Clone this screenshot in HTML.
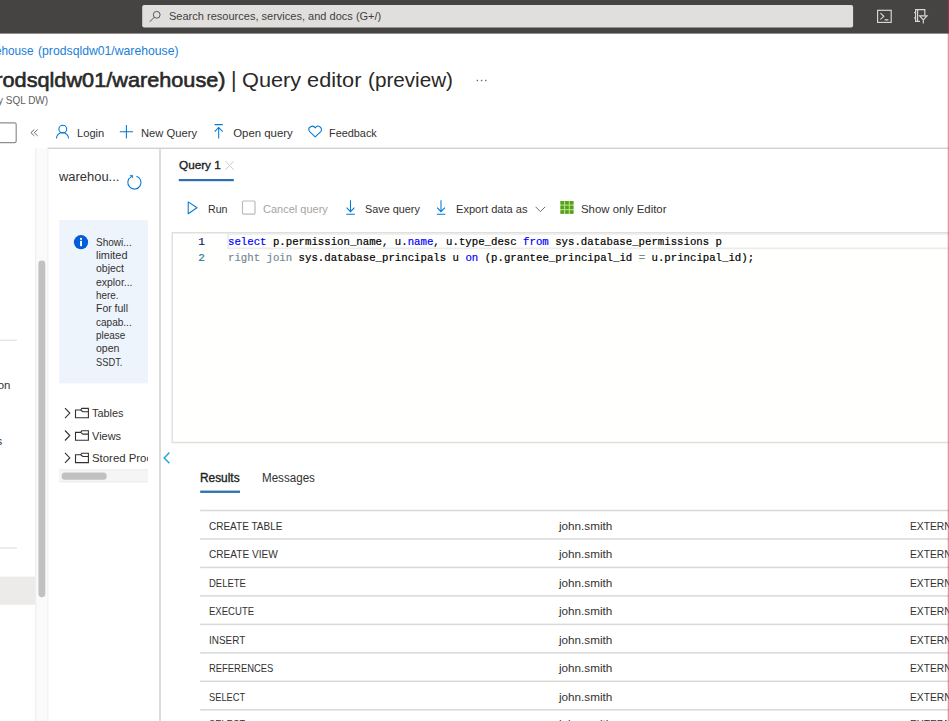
<!DOCTYPE html>
<html lang="en">
<head>
<meta charset="utf-8">
<title>Query editor (preview)</title>
<style>
html,body{margin:0;padding:0;}
body{width:949px;height:721px;overflow:hidden;position:relative;background:#fff;
  font-family:"Liberation Sans",sans-serif;color:#323130;}
.a{position:absolute;white-space:nowrap;line-height:1;transform-origin:0 0;}
.box{position:absolute;}
svg.ic{position:absolute;left:0;top:0;width:949px;height:721px;overflow:visible;pointer-events:none;}
.mono{font-family:"Liberation Mono",monospace;}
.bl{fill:none;stroke:#0078d4;stroke-width:1.05;}
.dk{fill:none;stroke:#323130;stroke-width:1.1;}
</style>
</head>
<body>
<!-- top bar -->
<div class="box" id="topbar" style="left:0;top:0;width:949px;height:33px;background:#464443;"></div>

<!-- command bar -->

<!-- left nav -->

<!-- object explorer -->


<!-- editor -->
<div class="box" id="edbox" style="left:172px;top:233px;width:777px;height:210px;background:#fffffe;"></div>

<!-- results -->

<svg class="ic" viewBox="0 0 949 721">
 <rect x="142.2" y="4.9" width="710.9" height="22.6" rx="2" fill="#e1dfdd"/>
 <rect x="0" y="576.6" width="35.3" height="28.2" fill="#edebe9"/>
 <rect x="35.3" y="148.5" width="12.2" height="573" fill="#fafafa"/>
 <rect x="35.3" y="148.5" width="0.9" height="573" fill="#ebebeb"/>
 <rect x="38.4" y="260.4" width="6.9" height="336.8" rx="3.45" fill="#c1c1c1"/>
 <rect x="59.2" y="220" width="88.8" height="163.4" fill="#eef4fc"/>
 <rect x="59" y="469.4" width="89" height="12.9" fill="#f5f5f5"/>
 <rect x="59" y="469.4" width="89" height="0.9" fill="#ebebeb"/>
 <rect x="59" y="481.4" width="89" height="0.9" fill="#ebebeb"/>
 <rect x="61.6" y="472.6" width="45.1" height="7.1" rx="3.5" fill="#c1c1c1"/>
 <rect x="-4" y="122.9" width="20.2" height="19.8" rx="1.6" fill="#fff" stroke="#918f8d" stroke-width="1.2"/>
 <rect x="242.5" y="201" width="12.5" height="13.1" rx="1" fill="#fff" stroke="#bebcba" stroke-width="1.2"/>
</svg>

<div class="a" id="searchtxt" style="left:169.00px;top:11.03px;font-size:11.40px;color:#3f3e3c;transform:scaleX(0.9678);">Search resources, services, and docs (G+/)</div>
<div class="a" id="crumb" style="left:-24.50px;top:45.02px;font-size:12.20px;color:#1a80d8;transform:scaleX(0.9644);">warehouse</div>
<div class="a" id="crumb2" style="left:37.90px;top:45.02px;font-size:12.20px;color:#1a80d8;transform:scaleX(1.0026);">(prodsqldw01/warehouse)</div>
<div class="a" id="title1" style="left:-23.97px;top:70.04px;font-size:20.60px;-webkit-text-stroke:0.6px #292827;color:#292827;transform:scaleX(1.0532);">(prodsqldw01/warehouse)</div>
<div class="a" id="title2" style="left:231.00px;top:70.03px;font-size:21.30px;color:#292827;">|</div>
<div class="a" id="title3" style="left:242.40px;top:70.04px;font-size:20.60px;color:#292827;transform:scaleX(1.0536);">Query editor</div>
<div class="a" id="title4" style="left:367.60px;top:70.04px;font-size:20.60px;color:#292827;transform:scaleX(1.0037);">(preview)</div>
<div class="a" id="sub" style="left:-2.20px;top:96.04px;font-size:10.30px;color:#605e5c;transform:scaleX(0.9693);">y SQL DW)</div>
<div class="a" id="login" style="left:77.10px;top:128.03px;font-size:11.40px;transform:scaleX(0.9794);">Login</div>
<div class="a" id="newq" style="left:140.60px;top:128.03px;font-size:11.40px;transform:scaleX(0.9827);">New Query</div>
<div class="a" id="openq" style="left:233.20px;top:128.03px;font-size:11.40px;">Open query</div>
<div class="a" id="feedb" style="left:329.00px;top:128.03px;font-size:11.40px;transform:scaleX(0.9554);">Feedback</div>
<div class="a" id="nav1" style="left:-2.30px;top:380.03px;font-size:11.40px;">on</div>
<div class="a" id="nav2" style="left:-3.40px;top:436.02px;font-size:11.40px;">s</div>
<div class="a" id="dbname" style="left:59.00px;top:171.03px;font-size:12.00px;transform:scaleX(1.0777);">warehou...</div>
<div class="a" id="info0" style="left:95.70px;top:238.04px;font-size:10.30px;transform:scaleX(0.9743);">Showi...</div>
<div class="a" id="info1" style="left:95.70px;top:251.03px;font-size:10.30px;transform:scaleX(1.0583);">limited</div>
<div class="a" id="info2" style="left:95.70px;top:264.03px;font-size:10.30px;transform:scaleX(1.0188);">object</div>
<div class="a" id="info3" style="left:95.70px;top:278.04px;font-size:10.30px;transform:scaleX(1.0121);">explor...</div>
<div class="a" id="info4" style="left:95.70px;top:291.03px;font-size:10.30px;transform:scaleX(0.9581);">here.</div>
<div class="a" id="info5" style="left:95.70px;top:304.03px;font-size:10.30px;transform:scaleX(1.0164);">For full</div>
<div class="a" id="info6" style="left:95.70px;top:318.02px;font-size:10.30px;transform:scaleX(0.9743);">capab...</div>
<div class="a" id="info7" style="left:95.70px;top:331.03px;font-size:10.30px;transform:scaleX(0.9656);">please</div>
<div class="a" id="info8" style="left:95.70px;top:344.03px;font-size:10.30px;transform:scaleX(1.0252);">open</div>
<div class="a" id="info9" style="left:95.70px;top:358.02px;font-size:10.30px;transform:scaleX(0.9045);">SSDT.</div>
<div class="a" id="tr1" style="left:92.00px;top:408.03px;font-size:11.40px;transform:scaleX(0.9594);">Tables</div>
<div class="a" id="tr2" style="left:91.60px;top:431.02px;font-size:11.40px;transform:scaleX(0.9640);">Views</div>
<div class="box" style="left:0;top:0;width:148.3px;height:721px;overflow:hidden;"><div class="a" id="tr3" style="left:92.00px;top:453.02px;font-size:11.40px;">Stored Procedures</div></div>
<div class="a" id="tab" style="left:178.80px;top:159.03px;font-size:11.60px;-webkit-text-stroke:0.35px #201f1e;color:#201f1e;transform:scaleX(1.0133);">Query 1</div>
<div class="a" id="run" style="left:207.80px;top:204.03px;font-size:11.40px;transform:scaleX(0.9327);">Run</div>
<div class="a" id="cancel" style="left:263.00px;top:204.03px;font-size:11.40px;color:#a6a4a2;transform:scaleX(0.9654);">Cancel query</div>
<div class="a" id="save" style="left:364.60px;top:204.03px;font-size:11.40px;transform:scaleX(0.9527);">Save query</div>
<div class="a" id="export" style="left:456.00px;top:204.03px;font-size:11.40px;transform:scaleX(0.9734);">Export data as</div>
<div class="a" id="showed" style="left:581.00px;top:204.03px;font-size:11.40px;">Show only Editor</div>
<div class="a mono" id="ln1" style="left:198.30px;top:237.02px;font-size:11.00px;color:#0b216f;-webkit-text-stroke:0.2px;">1</div>
<div class="a mono" id="ln2" style="left:198.30px;top:253.02px;font-size:11.00px;color:#237893;-webkit-text-stroke:0.2px;">2</div>
<div class="a mono" id="code1" style="left:228.20px;top:237.02px;font-size:11.00px;color:#000;-webkit-text-stroke:0.2px;transform:scaleX(0.9718);"><span style="color:#0000ff">select</span> p.permission_name, u.<span style="color:#0000ff">name</span>, u.type_desc <span style="color:#0000ff">from</span> sys.database_permissions p</div>
<div class="a mono" id="code2" style="left:228.20px;top:253.02px;font-size:11.00px;color:#000;-webkit-text-stroke:0.2px;transform:scaleX(0.9719);"><span style="color:#778899">right</span> <span style="color:#778899">join</span> sys.database_principals u <span style="color:#0000ff">on</span> (p.grantee_principal_id <span style="color:#778899">=</span> u.principal_id);</div>
<div class="a" id="res" style="left:200.40px;top:472.03px;font-size:12.00px;-webkit-text-stroke:0.35px #201f1e;color:#201f1e;transform:scaleX(0.9896);">Results</div>
<div class="a" id="msg" style="left:262.10px;top:472.03px;font-size:12.00px;transform:scaleX(0.9670);">Messages</div>
<div class="a" id="c1_0" style="left:209.00px;top:521.02px;font-size:11.40px;transform:scaleX(0.8784);">CREATE TABLE</div>
<div class="a" id="c2_0" style="left:558.90px;top:521.02px;font-size:11.40px;transform:scaleX(1.0265);">john.smith</div>
<div class="a" id="c3_0" style="left:910.40px;top:521.02px;font-size:11.40px;transform:scaleX(0.9000);">EXTERNAL_USER</div>
<div class="a" id="c1_1" style="left:209.00px;top:549.03px;font-size:11.40px;transform:scaleX(0.8861);">CREATE VIEW</div>
<div class="a" id="c2_1" style="left:558.90px;top:549.03px;font-size:11.40px;transform:scaleX(1.0265);">john.smith</div>
<div class="a" id="c3_1" style="left:910.40px;top:549.03px;font-size:11.40px;transform:scaleX(0.9000);">EXTERNAL_USER</div>
<div class="a" id="c1_2" style="left:209.00px;top:578.03px;font-size:11.40px;transform:scaleX(0.8305);">DELETE</div>
<div class="a" id="c2_2" style="left:558.90px;top:578.03px;font-size:11.40px;transform:scaleX(1.0265);">john.smith</div>
<div class="a" id="c3_2" style="left:910.40px;top:578.03px;font-size:11.40px;transform:scaleX(0.9000);">EXTERNAL_USER</div>
<div class="a" id="c1_3" style="left:209.00px;top:606.03px;font-size:11.40px;transform:scaleX(0.8381);">EXECUTE</div>
<div class="a" id="c2_3" style="left:558.90px;top:606.03px;font-size:11.40px;transform:scaleX(1.0265);">john.smith</div>
<div class="a" id="c3_3" style="left:910.40px;top:606.03px;font-size:11.40px;transform:scaleX(0.9000);">EXTERNAL_USER</div>
<div class="a" id="c1_4" style="left:209.00px;top:635.02px;font-size:11.40px;transform:scaleX(0.8707);">INSERT</div>
<div class="a" id="c2_4" style="left:558.90px;top:635.02px;font-size:11.40px;transform:scaleX(1.0265);">john.smith</div>
<div class="a" id="c3_4" style="left:910.40px;top:635.02px;font-size:11.40px;transform:scaleX(0.9000);">EXTERNAL_USER</div>
<div class="a" id="c1_5" style="left:209.00px;top:663.03px;font-size:11.40px;transform:scaleX(0.8258);">REFERENCES</div>
<div class="a" id="c2_5" style="left:558.90px;top:663.03px;font-size:11.40px;transform:scaleX(1.0265);">john.smith</div>
<div class="a" id="c3_5" style="left:910.40px;top:663.03px;font-size:11.40px;transform:scaleX(0.9000);">EXTERNAL_USER</div>
<div class="a" id="c1_6" style="left:209.00px;top:692.03px;font-size:11.40px;transform:scaleX(0.8169);">SELECT</div>
<div class="a" id="c2_6" style="left:558.90px;top:692.03px;font-size:11.40px;transform:scaleX(1.0265);">john.smith</div>
<div class="a" id="c3_6" style="left:910.40px;top:692.03px;font-size:11.40px;transform:scaleX(0.9000);">EXTERNAL_USER</div>
<div class="a" id="c1_7" style="left:209.00px;top:719.02px;font-size:11.40px;transform:scaleX(0.8169);">SELECT</div>
<div class="a" id="c2_7" style="left:558.90px;top:719.02px;font-size:11.40px;transform:scaleX(1.0265);">john.smith</div>
<div class="a" id="c3_7" style="left:910.40px;top:719.02px;font-size:11.40px;transform:scaleX(0.9000);">EXTERNAL_USER</div>

<svg class="ic" viewBox="0 0 949 721">
 <!-- rules and borders -->
 <rect x="0.00" y="33.00" width="949.00" height="0.60" fill="#464443"/>
 <rect x="47.60" y="147.60" width="902.00" height="1.30" fill="#cfcecd"/>
 <rect x="0.00" y="339.70" width="17.00" height="1.00" fill="#dddcdb"/>
 <rect x="0.00" y="547.50" width="17.00" height="1.00" fill="#dddcdb"/>
 <rect x="47.40" y="148.50" width="1.00" height="573.00" fill="#eeeeed"/>
 <rect x="159.10" y="148.50" width="1.80" height="573.00" fill="#d9d8d7"/>
 <rect x="178.80" y="179.00" width="55.00" height="2.20" fill="#2c6fb3"/>
 <rect x="200.20" y="490.60" width="39.80" height="2.30" fill="#2c6fb3"/>
 <path d="M950 232.7 H172.2 V442.5 H950" fill="none" stroke="#dfdfdf" stroke-width="1.4"/>
 <path d="M950 233.9 H228.2 V248.4 H950" fill="none" stroke="#ececec" stroke-width="1.8"/>
 <rect x="200.20" y="509.75" width="749.00" height="1.50" fill="#d9d8d7"/>
 <rect x="200.20" y="538.22" width="749.00" height="1.50" fill="#d9d8d7"/>
 <rect x="200.20" y="566.69" width="749.00" height="1.50" fill="#d9d8d7"/>
 <rect x="200.20" y="595.16" width="749.00" height="1.50" fill="#d9d8d7"/>
 <rect x="200.20" y="623.63" width="749.00" height="1.50" fill="#d9d8d7"/>
 <rect x="200.20" y="652.10" width="749.00" height="1.50" fill="#d9d8d7"/>
 <rect x="200.20" y="680.57" width="749.00" height="1.50" fill="#d9d8d7"/>
 <rect x="200.20" y="709.04" width="749.00" height="1.50" fill="#d9d8d7"/>
 <!-- search -->
 <g fill="none" stroke="#5a5856" stroke-width="1"><circle cx="156.7" cy="14.8" r="3.4"/><path d="M154.3 17.3 L149.6 21.8"/></g>
 <!-- cloud shell -->
 <g fill="none" stroke="#dbd9d7" stroke-width="1.15"><rect x="877.6" y="10.3" width="13.6" height="12.1"/><path d="M880.4 13.2 L883.8 16.3 L880.4 19.4 M884.6 19.8 L888.4 19.8"/></g>
 <!-- directory + filter -->
 <g fill="none" stroke="#dbd9d7" stroke-width="1.15"><path d="M920 21.4 L915.6 21.4 L915.6 9.6 L924.8 9.6 L924.8 15"/><path d="M917.6 9.6 L917.6 21.4"/><path d="M914.2 12.6 L915.6 12.6 M914.2 18 L915.6 18" stroke-width="1.4"/><path d="M919.6 15.9 L927 15.9 L923.3 19.8 Z M923.3 19.8 L923.3 23.6"/></g>
 <!-- dots -->
 <g fill="#6a6866"><rect x="476.7" y="79.8" width="1.4" height="1.4"/><rect x="480.9" y="79.8" width="1.4" height="1.4"/><rect x="485.1" y="79.8" width="1.4" height="1.4"/></g>
 <!-- collapse double chevron -->
 <path d="M34.3 129.5 L30.9 132.7 L34.3 135.9 M37.7 129.5 L34.3 132.7 L37.7 135.9" fill="none" stroke="#605e5c" stroke-width="0.9"/>
 <!-- login person -->
 <g class="bl"><circle cx="62.8" cy="129.1" r="3.9"/><path d="M56.4 138.6 A6.1 6.1 0 0 1 68.6 138.6"/></g>
 <!-- plus -->
 <path class="bl" d="M119.8 131.7 H133 M126.4 125.1 V138.4"/>
 <!-- upload -->
 <path class="bl" d="M214.6 124.6 H222.8 M218.7 138.6 V127.4 M214.7 131.6 L218.7 127.4 L222.7 131.6"/>
 <!-- heart -->
 <path class="bl" d="M315.2 136.9 L309.4 131.3 A3.3 3.3 0 0 1 315.2 127.9 A3.3 3.3 0 0 1 321 131.3 Z" stroke-linejoin="round"/>
 <!-- refresh -->
 <g class="bl" stroke-width="0.95"><path d="M136.4 176.2 A6.6 6.6 0 1 1 130.9 176.9"/><path d="M129.8 175.3 L132.8 175.3 L132.8 178.3 Z" fill="#0078d4" stroke-width="0.3"/></g>
 <!-- info -->
 <circle cx="81" cy="242.2" r="7.1" fill="#015cda"/>
 <rect x="80.1" y="240.8" width="1.9" height="5.4" fill="#fff"/><rect x="80.1" y="237.9" width="1.9" height="1.9" fill="#fff"/>
 <!-- tree chevrons + folders -->
 <g class="dk">
  <path d="M65 408.1 L69.8 413.1 L65 418.1"/><path d="M75.5 410 H80.6 L81.8 408.4 H88.4 V417.8 H75.5 Z M80.6 410 L82.9 411.7 H88.4"/>
  <path d="M65 430.5 L69.8 435.5 L65 440.5"/><path d="M75.5 432.4 H80.6 L81.8 430.8 H88.4 V440.2 H75.5 Z M80.6 432.4 L82.9 434.1 H88.4"/>
  <path d="M65 452.9 L69.8 457.9 L65 462.9"/><path d="M75.5 454.8 H80.6 L81.8 453.2 H88.4 V462.6 H75.5 Z M80.6 454.8 L82.9 456.5 H88.4"/>
 </g>
 <!-- splitter chevron -->
 <path d="M169.4 452.6 L164.2 457.9 L169.4 463.2" fill="none" stroke="#1ba1e2" stroke-width="1.4"/>
 <!-- tab close -->
 <path d="M225.4 161.3 L233.7 169.7 M233.7 161.3 L225.4 169.7" fill="none" stroke="#c8c6c4" stroke-width="0.9"/>
 <!-- run -->
 <path class="bl" d="M188.2 201.9 L197 207.8 L188.2 213.7 Z" stroke-linejoin="round"/>
 <!-- download x2 -->
 <path class="bl" d="M350.5 200.2 V211.6 M346.6 207.7 L350.5 211.7 L354.4 207.7 M346.3 214.3 H354.8"/>
 <path class="bl" d="M441 200.2 V211.6 M437.1 207.7 L441 211.7 L444.9 207.7 M436.8 214.3 H445.3"/>
 <!-- chevron down -->
 <path d="M535.6 206.8 L540.4 211.6 L545.2 206.8" fill="none" stroke="#605e5c" stroke-width="0.9"/>
 <!-- grid -->
 <rect x="560.4" y="201" width="13.1" height="12.8" fill="#b4ea8c"/>
 <g fill="#5a9e1e">
  <rect x="560.4" y="201" width="3.7" height="3.6"/><rect x="565.1" y="201" width="3.7" height="3.6"/><rect x="569.8" y="201" width="3.7" height="3.6"/>
  <rect x="560.4" y="205.6" width="3.7" height="3.6"/><rect x="565.1" y="205.6" width="3.7" height="3.6"/><rect x="569.8" y="205.6" width="3.7" height="3.6"/>
  <rect x="560.4" y="210.2" width="3.7" height="3.6"/><rect x="565.1" y="210.2" width="3.7" height="3.6"/><rect x="569.8" y="210.2" width="3.7" height="3.6"/>
 </g>
 <rect x="947.75" y="0" width="1.25" height="721" fill="#d61e32" fill-opacity="0.5"/>
</svg>
</body>
</html>
